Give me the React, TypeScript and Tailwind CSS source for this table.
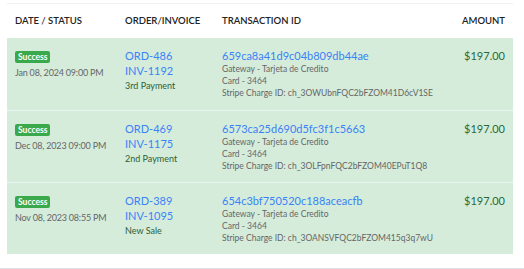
const rows = [
  {
    date: "Jan 08, 2024 09:00 PM",
    order: "ORD-486",
    invoice: "INV-1192",
    note: "3rd Payment",
    txn: "659ca8a41d9c04b809db44ae",
    charge: "ch_3OWUbnFQC2bFZOM41D6cV1SE",
  },
  {
    date: "Dec 08, 2023 09:00 PM",
    order: "ORD-469",
    invoice: "INV-1175",
    note: "2nd Payment",
    txn: "6573ca25d690d5fc3f1c5663",
    charge: "ch_3OLFpnFQC2bFZOM40EPuT1Q8",
  },
  {
    date: "Nov 08, 2023 08:55 PM",
    order: "ORD-389",
    invoice: "INV-1095",
    note: "New Sale",
    txn: "654c3bf750520c188aceacfb",
    charge: "ch_3OANSVFQC2bFZOM415q3q7wU",
  },
];

export default function App() {
  return (
    <div className="w-[524px] h-[269px] bg-white font-['Lato',sans-serif] flex flex-col">
      <div className="pl-[7px] pr-[11px] pt-[3px]">
        <div className="border-t border-[#eef0f3]">
          {/* Header */}
          <div className="flex h-[34px] items-center text-[9.5px] font-semibold text-[#222] uppercase">
            <div className="w-[118px] pl-[8px]">Date / Status</div>
            <div className="w-[97px]">Order/Invoice</div>
            <div className="flex-1">Transaction ID</div>
            <div className="pr-[8px]">Amount</div>
          </div>

          {rows.map((r, i) => (
            <div
              key={r.order}
              className={
                "flex bg-[#d5ecdb] h-[72px] pt-[10px] " +
                (i > 0 ? "border-t border-[#e9f4f4]" : "")
              }
            >
              <div className="w-[118px] pl-[8px] flex flex-col items-start">
                <span className="bg-[#3aa94b] text-white text-[8.5px] font-bold leading-[12px] px-[3px] rounded-[2px] mt-[3px]">
                  Success
                </span>
                <div className="text-[9px] tracking-[-0.2px] text-[#666] leading-[12px] mt-[4px]">
                  {r.date}
                </div>
              </div>
              <div className="w-[97px]">
                <div className="text-[11px] text-[#3b82f6] leading-[15px]">{r.order}</div>
                <div className="text-[11px] text-[#3b82f6] leading-[15px]">{r.invoice}</div>
                <div className="text-[9px] text-[#2d5e35] leading-[12px] mt-[2px]">{r.note}</div>
              </div>
              <div className="flex-1">
                <div className="text-[11px] text-[#3b82f6] leading-[15px]">{r.txn}</div>
                <div className="text-[8.5px] text-[#666] leading-[12px]">Gateway - Tarjeta de Credito</div>
                <div className="text-[8.5px] text-[#666] leading-[12px]">Card - 3464</div>
                <div className="text-[8.5px] text-[#666] leading-[12px]">Stripe Charge ID: {r.charge}</div>
              </div>
              <div className="pr-[8px] text-[11px] text-[#2a6a36] leading-[15px]">$197.00</div>
            </div>
          ))}
        </div>
      </div>
      <div className="flex-1" />
      <div className="h-[1px] bg-[#dde1e6]" />
    </div>
  );
}
